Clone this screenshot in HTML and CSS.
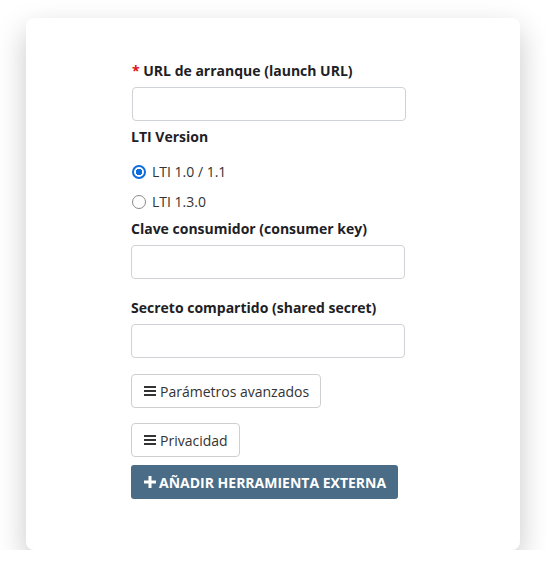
FILE: index.html
```html
<!DOCTYPE html>
<html lang="es">
<head>
<meta charset="utf-8">
<title>Herramienta externa</title>
<link rel="stylesheet" href="styles.css">
</head>
<body>
<div class="card">
  <form class="form">
    <div class="group group-url">
      <label class="label"><span class="req">*</span> URL de arranque (launch URL)</label>
      <input class="input" type="text">
    </div>
    <div class="group group-lti">
      <label class="label">LTI Version</label>
      <div class="radios">
        <label class="radio"><span class="dot checked"></span>LTI 1.0 / 1.1</label>
        <label class="radio"><span class="dot"></span>LTI 1.3.0</label>
      </div>
    </div>
    <div class="group group-key">
      <label class="label">Clave consumidor (consumer key)</label>
      <input class="input" type="text">
    </div>
    <div class="group group-secret">
      <label class="label">Secreto compartido (shared secret)</label>
      <input class="input" type="text">
    </div>
    <button type="button" class="btn btn-adv"><svg class="ico" viewBox="0 0 12 12" width="12" height="12"><rect x="0" y="1" width="12" height="2"/><rect x="0" y="5" width="12" height="2"/><rect x="0" y="9" width="12" height="2"/></svg>Parámetros avanzados</button>
    <button type="button" class="btn btn-priv"><svg class="ico" viewBox="0 0 12 12" width="12" height="12"><rect x="0" y="1" width="12" height="2"/><rect x="0" y="5" width="12" height="2"/><rect x="0" y="9" width="12" height="2"/></svg>Privacidad</button>
    <button type="button" class="btn-primary"><svg class="ico-plus" viewBox="0 0 12 12" width="12" height="12"><rect x="4.5" y="0" width="3" height="12"/><rect x="0" y="4.5" width="12" height="3"/></svg>AÑADIR HERRAMIENTA EXTERNA</button>
  </form>
</div>
</body>
</html>
```
FILE: styles.css
```css
html, body {
  margin: 0;
  padding: 0;
  background: #ffffff;
}
body {
  font-family: "Open Sans", "Noto Sans", sans-serif;
  color: #1d2125;
  font-size: 14px;
}
.card {
  margin: 18px 0 0 26px;
  width: 494px;
  height: 532px;
  box-sizing: border-box;
  background: #fff;
  border-radius: 8px;
  box-shadow: 0 12px 30px rgba(0, 0, 0, 0.22);
  padding: 42px 0 0 105px;
}
.form {
  display: flex;
  flex-direction: column;
  align-items: flex-start;
  width: 274px;
}
.group {
  display: flex;
  flex-direction: column;
  width: 100%;
}
.label {
  font-weight: 700;
  font-size: 14px;
  line-height: 21px;
  color: #1d2125;
}
.req {
  color: #e0101a;
}
.input {
  margin-top: 6px;
  height: 34px;
  box-sizing: border-box;
  width: 274px;
  border: 1px solid #cfd2d6;
  border-radius: 4px;
  background: #fff;
  padding: 0 10px;
  font: inherit;
}
.group-url {
  padding-left: 1px;
}
.group-lti {
  margin-top: 5px;
}
.radios {
  display: flex;
  flex-direction: column;
  gap: 9px;
  margin-top: 14px;
}
.radio {
  display: flex;
  align-items: center;
  gap: 6px;
  line-height: 21px;
  font-size: 14px;
  color: #333;
  padding-left: 1px;
}
.dot {
  width: 14px;
  height: 14px;
  box-sizing: border-box;
  border-radius: 50%;
  border: 1.8px solid #8a8a8a;
  background: #fff;
  display: inline-block;
}
.dot.checked {
  border: 2px solid #0f6cde;
  background: radial-gradient(circle, #0f6cde 0 3px, #fff 3.5px);
}
.group-key {
  margin-top: 6px;
}
.group-secret {
  margin-top: 18px;
}
.btn {
  display: inline-flex;
  align-items: center;
  gap: 4px;
  height: 34px;
  box-sizing: border-box;
  border: 1px solid #cfcfcf;
  border-radius: 4px;
  background: #fff;
  color: #333;
  padding: 0 11px 0 12px;
  font: inherit;
  font-size: 14px;
}
.ico {
  fill: #333;
}
.btn-adv {
  margin-top: 16px;
}
.btn-priv {
  margin-top: 15px;
}
.btn-primary {
  margin-top: 8px;
  display: inline-flex;
  align-items: center;
  gap: 3px;
  height: 34px;
  box-sizing: border-box;
  border: none;
  border-radius: 3px;
  background: #4a6c86;
  color: #fff;
  padding: 0 12px 0 13px;
  font: inherit;
  font-weight: 700;
  font-size: 14px;
}
.ico-plus {
  fill: #fff;
}
```
